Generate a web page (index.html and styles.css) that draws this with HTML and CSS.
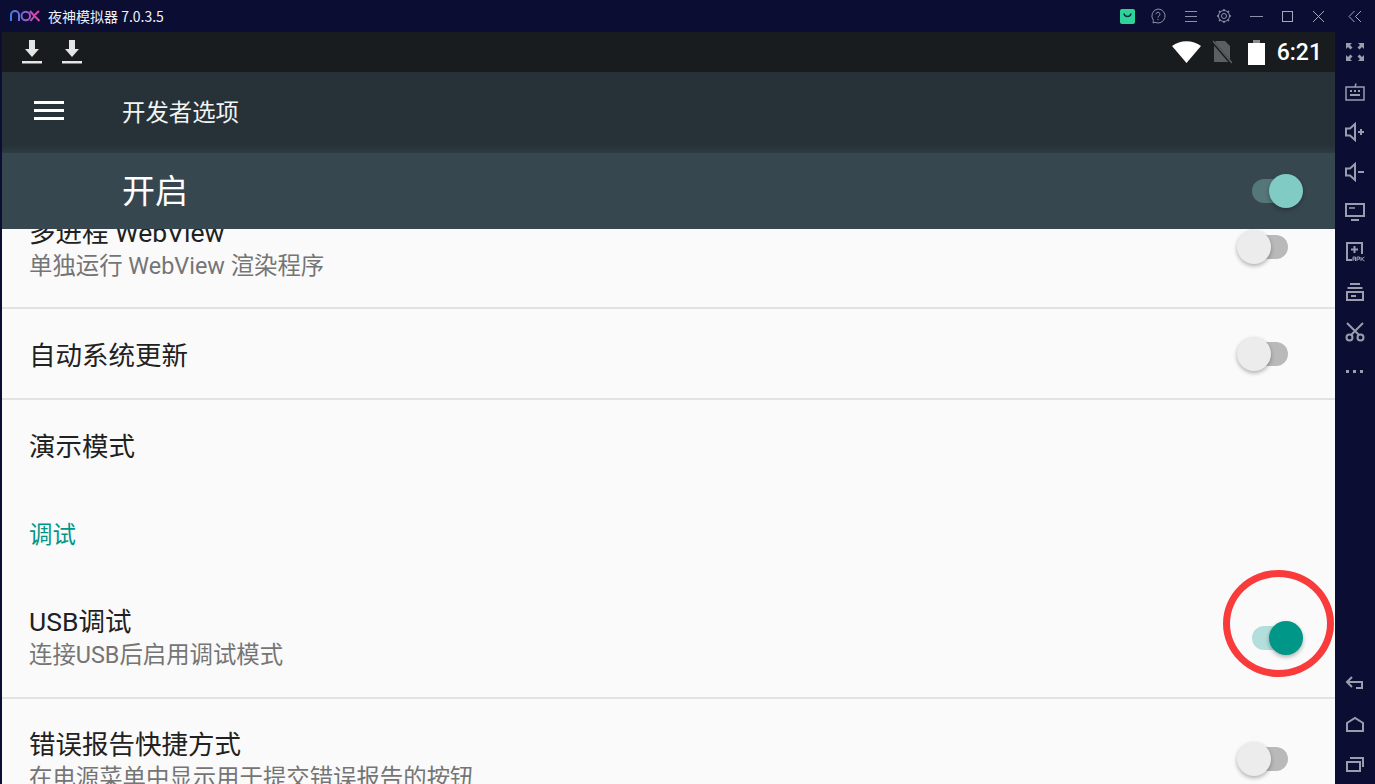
FILE: index.html
```html
<!DOCTYPE html>
<html lang="zh-CN">
<head>
  <meta charset="UTF-8">
  <title>夜神模拟器</title>
  <link rel="stylesheet" href="styles.css">
</head>
<body>
  <div class="window">
    <div class="titlebar">
      <svg class="logo" width="31" height="14" viewBox="0 0 31 14">
        <defs>
          <linearGradient id="noxGrad" x1="0" x2="1" y1="0" y2="0">
            <stop offset="0" stop-color="#3f7cf0"/>
            <stop offset="0.5" stop-color="#8f5fd0"/>
            <stop offset="1" stop-color="#ee3f9c"/>
          </linearGradient>
        </defs>
        <path d="M1 12V6a4 4 0 0 1 8 0v6M11.500 7a4.300 4.300 0 1 0 8.600 0a4.300 4.300 0 1 0-8.600 0M20 2l4 4.500 5-4.500M20.500 12l4-5 5 5" fill="none" stroke="url(#noxGrad)" stroke-width="2"/>
      </svg>
      <span class="title-text">夜神模拟器 7.0.3.5</span>
      <div class="title-icons">
        <svg class="t-shop" width="15" height="15" viewBox="0 0 15 15"><rect width="15" height="15" rx="2" fill="#2ed39a"/><path d="M4 4.500c.5 4 6.500 4 7 0" fill="none" stroke="#0b2a3a" stroke-width="1.500"/></svg>
        <svg width="16" height="16" viewBox="0 0 16 16" fill="none" stroke="#8d90a8"><path d="M8 1a7 7 0 1 1-3 13.300L3 15l.4-2.700A7 7 0 0 1 8 1z"/><path d="M6 6.200a2 2 0 1 1 3 1.800c-.7.400-1 .8-1 1.600M8 11v1.200"/></svg>
        <svg width="14" height="14" viewBox="0 0 14 14" stroke="#8d90a8"><path d="M1 2.500h12M1 7.500h12M1 12.500h12"/></svg>
        <svg width="16" height="16" viewBox="0 0 16 16" fill="none" stroke="#8d90a8"><circle cx="8" cy="8" r="2.500"/><circle cx="8" cy="8" r="5.500" stroke-width="1"/><path d="M8 1v2M8 13v2M1 8h2M13 8h2M3 3l1.400 1.400M11.600 11.600L13 13M13 3l-1.400 1.400M4.400 11.600L3 13" stroke-width="1.500"/></svg>
        <svg width="13" height="13" viewBox="0 0 13 13" stroke="#8d90a8"><path d="M0 6.500h13"/></svg>
        <svg width="13" height="13" viewBox="0 0 13 13" fill="none" stroke="#a5a7bb"><rect x="1.500" y="1.500" width="10" height="10"/></svg>
        <svg width="13" height="13" viewBox="0 0 13 13" stroke="#a5a7bb"><path d="M1 1l11 11M12 1L1 12"/></svg>
        <svg class="t-collapse" width="14" height="13" viewBox="0 0 14 13" fill="none" stroke="#a5a7bb"><path d="M6.500 1L1 6.500 6.500 12M13 1L7.500 6.500 13 12"/></svg>
      </div>
    </div>
    <div class="main">
      <div class="screen">
        <div class="statusbar">
          <svg class="dl" width="20" height="26" viewBox="0 0 20 26" fill="#e4e6e6"><path d="M7 1h6v9h4l-7 8-7-8h4z"/><rect y="22" width="20" height="2.500"/></svg>
          <svg class="dl" width="20" height="26" viewBox="0 0 20 26" fill="#e4e6e6"><path d="M7 1h6v9h4l-7 8-7-8h4z"/><rect y="22" width="20" height="2.500"/></svg>
          <div class="status-right">
            <svg width="29" height="22" viewBox="0 0 29 22" fill="#fff"><path d="M14.500 22L0 5C8-1.500 21-1.500 29 5z"/></svg>
            <svg class="s-sim" width="20" height="24" viewBox="0 0 20 24"><path d="M4 1h9l5 5v16H2V3z" fill="#5c5f60"/><path d="M0 1l20 23" stroke="#181c1e" stroke-width="3"/><path d="M1 1l19 22" stroke="#5c5f60" stroke-width="1.500"/></svg>
            <svg width="17" height="25" viewBox="0 0 17 25"><rect x="5" y="0" width="7" height="4" fill="#8b8d8d"/><rect x="0" y="3" width="17" height="22" fill="#fff"/></svg>
            <span class="clock">6:21</span>
          </div>
        </div>
        <div class="appbar">
          <div class="hamburger"><i></i><i></i><i></i></div>
          <span class="appbar-title">开发者选项</span>
        </div>
        <div class="master">
          <span class="master-label">开启</span>
          <div class="switch on light"><span class="track"></span><span class="thumb"></span></div>
        </div>
        <div class="list">
          <div class="row row-first">
            <div class="row-text">
              <div class="row-title">多进程 WebView</div>
              <div class="row-sub">单独运行 WebView 渲染程序</div>
            </div>
            <div class="switch"><span class="track"></span><span class="thumb"></span></div>
          </div>
          <div class="row row-single">
            <div class="row-title">自动系统更新</div>
            <div class="switch"><span class="track"></span><span class="thumb"></span></div>
          </div>
          <div class="row row-demo">
            <div class="row-title">演示模式</div>
          </div>
          <div class="section">调试</div>
          <div class="row row-usb">
            <div class="row-text">
              <div class="row-title">USB调试</div>
              <div class="row-sub">连接USB后启用调试模式</div>
            </div>
            <div class="switch on"><span class="track"></span><span class="thumb"></span></div>
          </div>
          <div class="row row-bug">
            <div class="row-text">
              <div class="row-title">错误报告快捷方式</div>
              <div class="row-sub">在电源菜单中显示用于提交错误报告的按钮</div>
            </div>
            <div class="switch"><span class="track"></span><span class="thumb"></span></div>
          </div>
        </div>
        <div class="red-circle"></div>
      </div>
      <div class="sidebar">
        <div class="side-group">
          <svg width="20" height="20" viewBox="0 0 20 20" fill="#9b9cae"><path d="M1 1h6L5 3l2.500 2.500-2 2L3 5 1 7zM19 1h-6l2 2-2.500 2.500 2 2L17 5l2 2zM1 19h6l-2-2 2.500-2.500-2-2L3 15l-2-2zM19 19h-6l2-2-2.500-2.500 2-2L17 15l2-2z"/></svg>
          <svg width="20" height="20" viewBox="0 0 20 20" fill="none" stroke="#9b9cae" stroke-width="1.500"><path d="M1 5h18v13H1zM10 5L11 1.500"/><path d="M5 9h2M9 9h2M13 9h2M5 13h10" stroke-width="2"/></svg>
          <svg width="20" height="20" viewBox="0 0 20 20" fill="none" stroke="#9b9cae" stroke-width="1.500"><path d="M1 6.500h4L10 2v16l-5-4.500H1z" stroke-width="2"/><path d="M13 10h6M16 7v6" stroke-width="2"/></svg>
          <svg width="20" height="20" viewBox="0 0 20 20" fill="none" stroke="#9b9cae" stroke-width="1.500"><path d="M1 6.500h4L10 2v16l-5-4.500H1z" stroke-width="2"/><path d="M13 10h6" stroke-width="2"/></svg>
          <svg width="20" height="20" viewBox="0 0 20 20" fill="none" stroke="#9b9cae" stroke-width="2"><path d="M1 2h18v12H1zM6 18h8"/><path d="M4 6h6" stroke-width="1.500"/></svg>
          <svg width="20" height="20" viewBox="0 0 20 20" fill="none" stroke="#9b9cae" stroke-width="1.500"><path d="M7 18H2V1h15v11" stroke-width="2"/><path d="M9.500 4v7M6 7.500h7" stroke-width="2"/><path d="M8 19v-4h2.500v4M8 17h2.500M12 19v-4h2.500v2.200H12M16 15v4M19.500 15l-3 2 3 2" stroke-width="1"/></svg>
          <svg width="20" height="20" viewBox="0 0 20 20" fill="none" stroke="#9b9cae" stroke-width="2"><path d="M5 2h10M2.500 6h15M2 10h16v8H2zM6 14h5"/></svg>
          <svg width="20" height="20" viewBox="0 0 20 20" fill="none" stroke="#9b9cae" stroke-width="2"><path d="M2 1l12 12M18 1L6 13"/><circle cx="4.500" cy="15.500" r="3"/><circle cx="15.500" cy="15.500" r="3"/></svg>
          <svg width="20" height="20" viewBox="0 0 20 20" fill="#9b9cae"><rect x="1" y="8" width="3" height="3"/><rect x="8" y="8" width="3" height="3"/><rect x="15" y="8" width="3" height="3"/></svg>
        </div>
        <div class="side-group side-nav">
          <svg width="20" height="20" viewBox="0 0 20 20" fill="none" stroke="#9b9cae" stroke-width="2"><path d="M7 3L2 8l5 5M2 8h15v6h-6"/></svg>
          <svg width="20" height="20" viewBox="0 0 20 20" fill="none" stroke="#9b9cae" stroke-width="2"><path d="M2 17V9l8-5 8 5v8z"/></svg>
          <svg width="20" height="20" viewBox="0 0 20 20" fill="none" stroke="#9b9cae" stroke-width="2"><path d="M2 8h13v9H2zM5 4h13v9"/></svg>
        </div>
      </div>
    </div>
  </div>
</body>
</html>
```

FILE: styles.css
```css
* {
  box-sizing: border-box;
}
body {
  margin: 0;
  background-color: #0b0d33;
  font-family: Roboto, "Noto Sans CJK SC", sans-serif;
  overflow: hidden;
}
.window {
  width: 1375px;
  height: 784px;
  display: flex;
  flex-direction: column;
  background-color: #0b0d33;
}

/* title bar */
.titlebar {
  height: 32px;
  display: flex;
  align-items: center;
  padding-left: 10px;
  color: #eef0f6;
}
.logo {
  margin-right: 7px;
}
.title-text {
  font-family: "Noto Sans CJK SC", sans-serif;
  font-size: 14px;
}
.title-icons {
  margin-left: auto;
  display: flex;
  align-items: center;
  gap: 18px;
  padding-right: 13px;
}
.title-icons svg {
  display: block;
}
.t-shop {
  margin-right: -3px;
}
.t-collapse {
  margin-left: 5px;
}

.main {
  flex: 1;
  display: flex;
  min-height: 0;
}

/* android screen */
.screen {
  position: relative;
  width: 1333px;
  margin-left: 2px;
  height: 752px;
  overflow: hidden;
  background-color: #fafafa;
  display: flex;
  flex-direction: column;
}
.statusbar {
  height: 40px;
  flex: none;
  background-color: #181c1e;
  display: flex;
  align-items: center;
  padding-left: 20px;
  gap: 20px;
}
.status-right {
  margin-left: auto;
  display: flex;
  align-items: center;
  gap: 11px;
  padding-right: 13px;
}
.s-sim {
  margin-right: 5px;
}
.clock {
  font-size: 23px;
  font-weight: 500;
  color: #fff;
  margin-left: 1px;
}
.appbar {
  height: 81px;
  flex: none;
  background: linear-gradient(#263238 0, #263238 90%, #2e3b42 100%);
  display: flex;
  align-items: center;
  padding-left: 32px;
  padding-bottom: 4px;
  color: #f2f4f4;
}
.hamburger {
  width: 30px;
  display: flex;
  flex-direction: column;
  gap: 5px;
  margin-right: 58px;
}
.hamburger i {
  display: block;
  height: 3px;
  background-color: #fff;
}
.appbar-title {
  font-size: 23.400px;
}
.master {
  height: 76px;
  flex: none;
  background-color: #37474f;
  display: flex;
  align-items: center;
  padding-left: 120px;
  padding-right: 32px;
  padding-bottom: 4px;
  justify-content: space-between;
  color: #fff;
}
.master-label {
  font-size: 33px;
}
.master .switch {
  margin-bottom: -4px;
}

/* list, scrolled so the first row is cut off by the header */
.list {
  flex: 1;
  overflow: hidden;
  color: #212121;
}
.row {
  display: flex;
  align-items: center;
  justify-content: space-between;
  padding-left: 27px;
  padding-right: 32px;
  border-bottom: 2px solid #e2e2e2;
}
.row-first {
  height: 81px;
  margin-top: -1px;
}
.row-first .row-text {
  margin-top: -37px;
}
.row-first .switch {
  margin-top: -42px;
}
.row-single {
  height: 91px;
}
.row-single .row-title {
  margin-top: 4px;
}
.row-demo {
  height: 92px;
  border-bottom: none;
}
.row-demo .row-title {
  margin-top: 2px;
}
.row-usb {
  height: 120px;
}
.row-usb .row-text {
  margin-top: -1px;
}
.row-bug {
  height: 90px;
  align-items: flex-start;
  padding-top: 29px;
  border-bottom: none;
}
.row-bug .switch {
  margin-top: 13px;
}
.row-title {
  font-size: 26.500px;
  line-height: 34px;
}
.row-sub {
  font-size: 23.400px;
  line-height: 32px;
  color: #757575;
}
.section {
  height: 87px;
  padding-left: 27px;
  padding-top: 27px;
  font-size: 23.400px;
  line-height: 32px;
  color: #009688;
}

/* switches */
.switch {
  position: relative;
  width: 52px;
  height: 36px;
  flex: none;
}
.track {
  position: absolute;
  left: 0;
  top: 6px;
  width: 37px;
  height: 24px;
  border-radius: 12px;
  background-color: #b9b9b9;
}
.thumb {
  position: absolute;
  left: -14px;
  top: 1px;
  width: 34px;
  height: 34px;
  border-radius: 50%;
  background-color: #ececec;
  box-shadow: 0 2px 4px rgba(0,0,0,0.3);
}
.switch.on .track {
  left: 1px;
  background-color: #b2dfdb;
}
.switch.on .thumb {
  left: 18px;
  background-color: #009688;
}
.switch.on.light .track {
  background-color: #56777a;
}
.switch.on.light .thumb {
  background-color: #80cbc4;
}

.red-circle {
  position: absolute;
  left: 1221px;
  top: 538px;
  width: 111px;
  height: 107px;
  border: 7px solid #f93b3b;
  border-radius: 50%;
}

/* right tool strip */
.sidebar {
  width: 40px;
  flex: none;
  display: flex;
  flex-direction: column;
  justify-content: space-between;
  align-items: center;
  padding: 10px 0 10px;
}
.side-group {
  display: flex;
  flex-direction: column;
  gap: 20px;
}
.side-group svg {
  display: block;
}
```
